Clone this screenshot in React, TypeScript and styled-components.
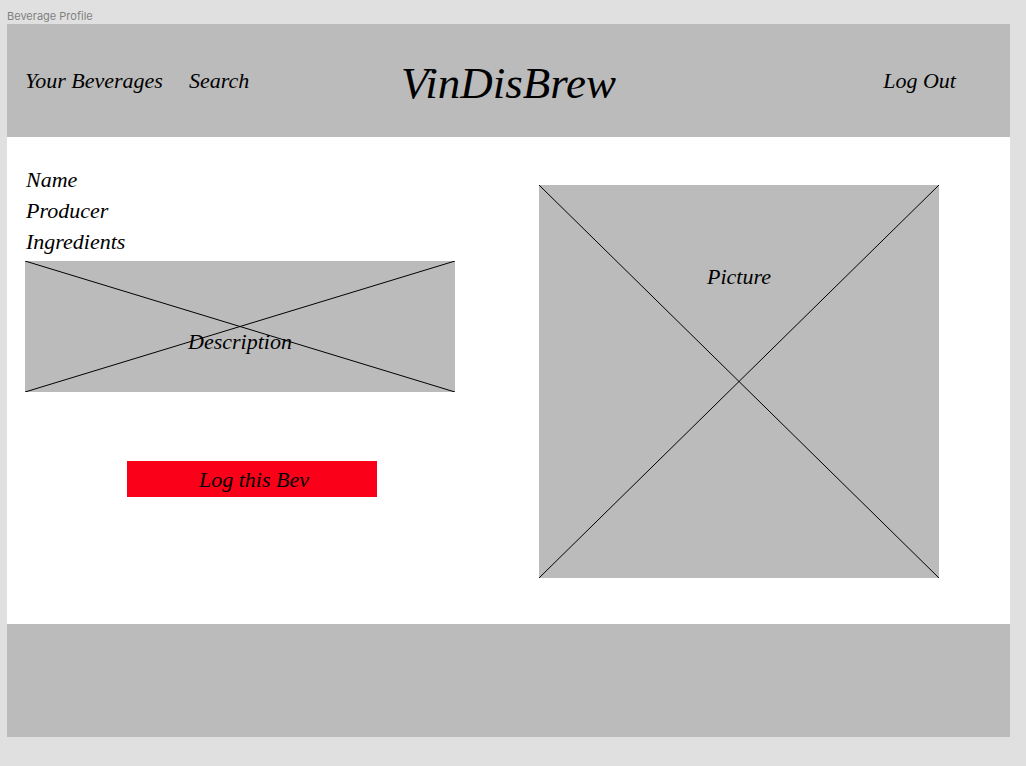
import React from "react";
import styled, { createGlobalStyle } from "styled-components";

const GlobalStyle = createGlobalStyle`
  *, *::before, *::after {
    box-sizing: border-box;
  }

  body {
    margin: 0;
    background: #e0e0e0;
    color: #000;
    font-family: "Liberation Serif", serif;
    font-style: italic;
    font-size: 22px;
    line-height: 31px;
  }
`;

const Canvas = styled.div`
  padding: 8px 16px 28px 7px;
`;

const FrameLabel = styled.div`
  color: #808080;
  font-family: Inter, sans-serif;
  font-style: normal;
  font-size: 11px;
  line-height: 16px;
`;

const Frame = styled.div`
  background: #fff;
`;

const Header = styled.header`
  display: grid;
  grid-template-columns: 1fr auto 1fr;
  align-items: center;
  min-height: 113px;
  background: #bbb;
`;

const Nav = styled.nav<{ $end?: boolean }>`
  display: flex;
  gap: 26px;
  justify-content: ${({ $end }) => ($end ? "flex-end" : "flex-start")};
  padding: ${({ $end }) => ($end ? "0 54px 0 0" : "0 0 0 18px")};
`;

const NavLink = styled.a`
  color: inherit;
  text-decoration: none;
  white-space: nowrap;
`;

const Brand = styled.h1`
  margin: 0;
  padding-top: 4px;
  font-size: 45px;
  font-weight: 400;
  line-height: 52px;
`;

const Main = styled.main`
  display: grid;
  grid-template-columns: 43fr 40fr;
  column-gap: 84px;
  align-items: start;
  min-height: 487px;
  padding: 27px 71px 45px 18px;
`;

const Details = styled.section`
  display: flex;
  flex-direction: column;
`;

const Facts = styled.ul`
  margin: 0 0 4px;
  padding: 0 0 0 1px;
  list-style: none;
`;

const Placeholder = styled.div<{ $height: number; $labelTop: number }>`
  position: relative;
  min-height: ${({ $height }) => $height}px;
  padding-top: ${({ $labelTop }) => $labelTop}px;
  background: #bbb;
  text-align: center;
`;

const Cross = styled.svg`
  position: absolute;
  inset: 0;
  width: 100%;
  height: 100%;
  stroke: #000;
  stroke-width: 1;
`;

const PlaceholderLabel = styled.span`
  position: relative;
`;

const PictureColumn = styled.section`
  padding-top: 21px;
`;

const LogButton = styled.button`
  width: 250px;
  max-width: 100%;
  height: 36px;
  margin: 69px 0 0 102px;
  padding: 0 0 0 4px;
  border: 0;
  background: #fa0019;
  color: inherit;
  font: inherit;
  cursor: pointer;
`;

const Footer = styled.footer`
  min-height: 113px;
  background: #bbb;
`;

type CrossedBoxProps = { label: string; height: number; labelTop: number };

function CrossedBox({ label, height, labelTop }: CrossedBoxProps) {
  return (
    <Placeholder $height={height} $labelTop={labelTop}>
      <Cross aria-hidden="true">
        <line x1="0" y1="0" x2="100%" y2="100%" />
        <line x1="0" y1="100%" x2="100%" y2="0" />
      </Cross>
      <PlaceholderLabel>{label}</PlaceholderLabel>
    </Placeholder>
  );
}

export default function App() {
  return (
    <>
      <GlobalStyle />
      <Canvas>
        <FrameLabel>Beverage Profile</FrameLabel>
        <Frame>
          <Header>
            <Nav>
              <NavLink href="#beverages">Your Beverages</NavLink>
              <NavLink href="#search">Search</NavLink>
            </Nav>
            <Brand>VinDisBrew</Brand>
            <Nav $end>
              <NavLink href="#logout">Log Out</NavLink>
            </Nav>
          </Header>
          <Main>
            <Details>
              <Facts>
                <li>Name</li>
                <li>Producer</li>
                <li>Ingredients</li>
              </Facts>
              <CrossedBox label="Description" height={131} labelTop={65} />
              <LogButton type="button">Log this Bev</LogButton>
            </Details>
            <PictureColumn>
              <CrossedBox label="Picture" height={393} labelTop={76} />
            </PictureColumn>
          </Main>
          <Footer />
        </Frame>
      </Canvas>
    </>
  );
}
